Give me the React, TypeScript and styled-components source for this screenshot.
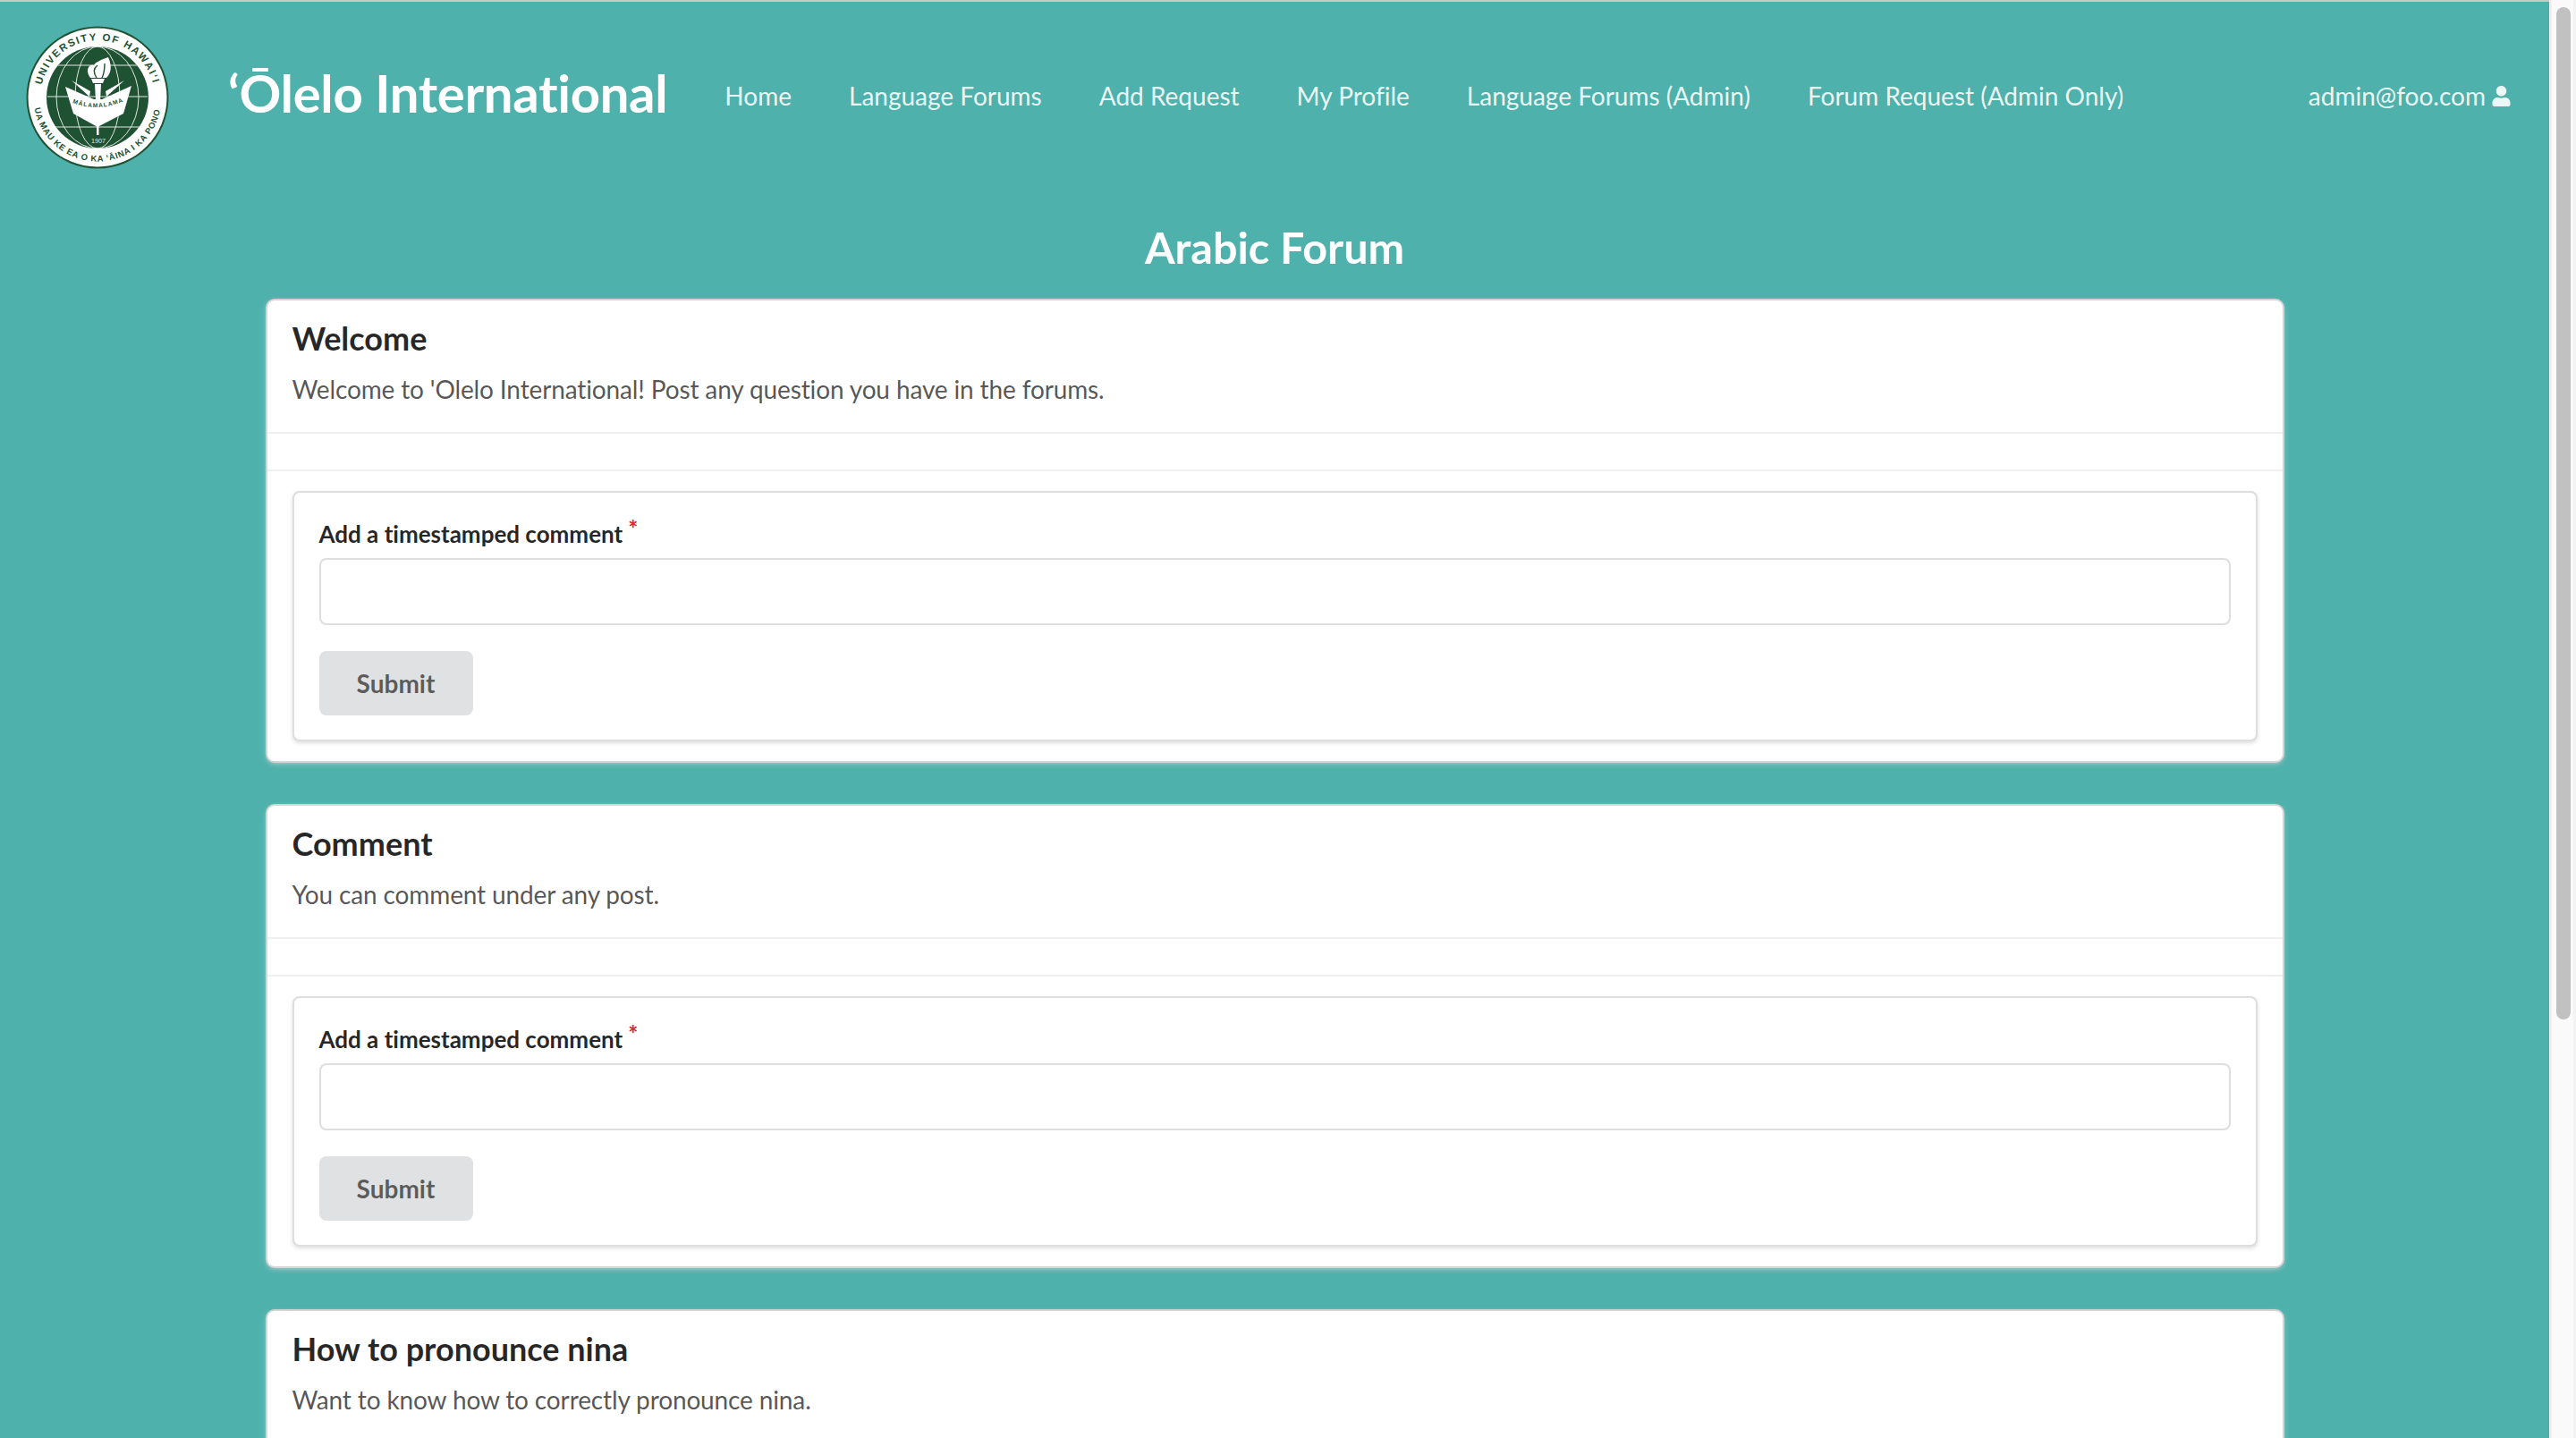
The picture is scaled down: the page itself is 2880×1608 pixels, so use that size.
import React from 'react';
import styled, { createGlobalStyle } from 'styled-components';
import { FaUser } from 'react-icons/fa';

const GlobalStyle = createGlobalStyle`
	html,
	body {
		margin: 0;
		padding: 0;
		height: 100%;
		overflow: hidden;
		background: #4fb1ac;
		font-family: 'Lato', 'Helvetica Neue', Arial, sans-serif;
		font-variant-ligatures: none;
	}

	* {
		box-sizing: border-box;
	}
`;

const Shell = styled.div`
	height: 100vh;
	display: flex;
`;

const Page = styled.div`
	flex: 1;
	min-width: 0;
	overflow: hidden;
	background: #4fb1ac;
	border-top: 2px solid #c9c9c9;
`;

const ScrollRail = styled.div`
	width: 30px;
	flex: none;
	padding: 8px 3px 0 5px;
	background: #fafafa;
	border-left: 3px solid #efefef;
	border-right: 3px solid #f3f3f3;
`;

const ScrollThumb = styled.div`
	height: 1132px;
	background: #c1c1c1;
	border-radius: 8px;
`;

const Header = styled.header`
	height: 214px;
	padding: 0 42px 0 29px;
	display: flex;
	align-items: center;
`;

const Logo = styled.svg`
	width: 160px;
	height: 160px;
	flex: none;
	margin-right: 66px;
`;

const Brand = styled.a`
	padding-bottom: 12px;
	font-size: 58px;
	font-weight: 700;
	letter-spacing: -0.3px;
	color: #fff;
	white-space: nowrap;
	margin-right: 32px;
`;

const NavLink = styled.a<{ $right?: boolean }>`
	display: flex;
	align-items: center;
	gap: 6px;
	padding: 0 32px 4px;
	font-size: 28px;
	color: rgba(255, 255, 255, 0.9);
	white-space: nowrap;
	${(p) => p.$right && 'margin-left: auto; padding-right: 0;'}
`;

const PageTitle = styled.h1`
	margin: 0;
	height: 120px;
	display: flex;
	align-items: center;
	justify-content: center;
	font-size: 48.5px;
	font-weight: 700;
	color: #fff;
`;

const CardList = styled.main`
	width: 2253px;
	margin: 0 auto;
	display: flex;
	flex-direction: column;
	gap: 50px;
`;

const Card = styled.section`
	flex: none;
	background: #fff;
	border-radius: 8px;
	box-shadow: 0 2px 6px 0 #d4d4d5, 0 0 0 2px #d4d4d5;
`;

const CardContent = styled.div`
	height: 147px;
	padding: 20px 28px 0;
`;

const CardTitle = styled.h2`
	margin: 0;
	font-size: 36px;
	line-height: 44px;
	font-weight: 700;
	color: rgba(0, 0, 0, 0.85);
`;

const CardText = styled.p`
	margin: 15px 0 0;
	font-size: 28px;
	line-height: 40px;
	letter-spacing: -0.13px;
	color: rgba(0, 0, 0, 0.68);
`;

const CardExtra = styled.div`
	height: 44px;
	border-top: 2px solid rgba(34, 36, 38, 0.07);
	border-bottom: 2px solid rgba(34, 36, 38, 0.07);
`;

const CardForm = styled.div`
	padding: 22px 28px;
`;

const Segment = styled.form`
	padding: 28px 28px 0;
	height: 280px;
	border-radius: 8px;
	border: 2px solid rgba(34, 36, 38, 0.15);
	box-shadow: 0 2px 4px 0 rgba(34, 36, 38, 0.15);
`;

const Label = styled.label`
	display: block;
	font-size: 26px;
	line-height: 36px;
	font-weight: 700;
	color: rgba(0, 0, 0, 0.87);
	margin-bottom: 9px;
`;

const Required = styled.span`
	display: inline-block;
	vertical-align: top;
	margin: -6px 0 0 6px;
	color: #db2828;
`;

const TextInput = styled.input`
	display: block;
	width: 100%;
	height: 75px;
	border: 2px solid rgba(34, 36, 38, 0.15);
	border-radius: 8px;
	background: #fff;
	outline: none;
`;

const SubmitButton = styled.button`
	display: block;
	width: 172px;
	height: 72px;
	margin-top: 29px;
	border: 0;
	border-radius: 8px;
	background: #e0e1e2;
	font-family: inherit;
	font-size: 28px;
	font-weight: 700;
	color: rgba(0, 0, 0, 0.6);
`;

const SealLogo = () => (
	<Logo viewBox="0 0 160 160">
		<defs>
			<path id="seal-top" d="M 17.6 66 A 64 64 0 0 1 142.4 66" />
			<path id="seal-bottom" d="M 9.5 92 A 71.5 71.5 0 0 0 150.5 92" />
			<clipPath id="seal-globe">
				<circle cx="80" cy="80" r="57" />
			</clipPath>
		</defs>
		<circle cx="80" cy="80" r="79.5" fill="#1f5233" />
		<circle cx="80" cy="80" r="77.5" fill="#fff" />
		<circle cx="80" cy="80" r="57" fill="#1f5233" />
		<text fontFamily="Liberation Sans" fontWeight="700" fontSize="11.5" fill="#1f5233">
			<textPath href="#seal-top" textLength="170" lengthAdjust="spacing">
				UNIVERSITY OF HAWAI‘I
			</textPath>
		</text>
		<text fontFamily="Liberation Sans" fontWeight="700" fontSize="9.5" fill="#1f5233">
			<textPath href="#seal-bottom" textLength="198" lengthAdjust="spacing">
				UA MAU KE EA O KA ‘ĀINA I KA PONO
			</textPath>
		</text>
		<g clipPath="url(#seal-globe)" fill="none" stroke="#dfe8e2" strokeWidth="1">
			<ellipse cx="80" cy="80" rx="25" ry="57" />
			<ellipse cx="80" cy="80" rx="46" ry="57" />
			<path d="M 33 44 H 127 M 24 79 H 136 M 33 113 H 127" />
		</g>
		<path d="M72 58 C 66 50 70 42 76 44 C 78 40 84 38 92 35 C 96 44 96 52 90 58 Z" fill="#fff" />
		<path d="M79 58 C 75 52 76 47 80 44 M85 58 C 88 52 88 46 88 42" fill="none" stroke="#1f5233" strokeWidth="1.4" />
		<path d="M73 59 H 88 L 86 64 H 75 Z" fill="#fff" />
		<path d="M77 65 H 84 L 83 84 H 78 Z" fill="#fff" />
		<path d="M51 61 L 72 73 L 71 79 Z M 110 61 L 89 73 L 90 79 Z" fill="#fff" />
		<path d="M44 68 L 76 82 L 85 82 L 118 67 L 109 98 L 80 113 L 53 98 Z" fill="#fff" />
		<path d="M79 112 H 81.5 L 81.5 122 H 79 Z" fill="#fff" />
		<path id="seal-book" d="M 52 86 Q 80 97 110 84" fill="none" />
		<text fontFamily="Liberation Sans" fontWeight="700" fontSize="6.6" fill="#1f5233">
			<textPath href="#seal-book" textLength="58" lengthAdjust="spacing">MĀLAMALAMA</textPath>
		</text>
		<text x="81" y="131" textAnchor="middle" fontFamily="Liberation Sans" fontSize="7.2" fill="#dfe8e2">1907</text>
	</Logo>
);

type ForumCardProps = {
	title: string;
	text: string;
};

const ForumCard = ({ title, text }: ForumCardProps) => (
	<Card>
		<CardContent>
			<CardTitle>{title}</CardTitle>
			<CardText>{text}</CardText>
		</CardContent>
		<CardExtra />
		<CardForm>
			<Segment>
				<Label>
					Add a timestamped comment<Required>*</Required>
				</Label>
				<TextInput type="text" />
				<SubmitButton type="button">Submit</SubmitButton>
			</Segment>
		</CardForm>
	</Card>
);

const App = () => (
	<Shell>
		<GlobalStyle />
		<Page>
			<Header>
				<SealLogo />
				<Brand>‘Ōlelo International</Brand>
				<NavLink>Home</NavLink>
				<NavLink>Language Forums</NavLink>
				<NavLink>Add Request</NavLink>
				<NavLink>My Profile</NavLink>
				<NavLink>Language Forums (Admin)</NavLink>
				<NavLink>Forum Request (Admin Only)</NavLink>
				<NavLink $right>
					admin@foo.com
					<FaUser fontSize={23} />
				</NavLink>
			</Header>
			<PageTitle>Arabic Forum</PageTitle>
			<CardList>
				<ForumCard
					title="Welcome"
					text="Welcome to 'Olelo International! Post any question you have in the forums."
				/>
				<ForumCard title="Comment" text="You can comment under any post." />
				<ForumCard
					title="How to pronounce nina"
					text="Want to know how to correctly pronounce nina."
				/>
			</CardList>
		</Page>
		<ScrollRail>
			<ScrollThumb />
		</ScrollRail>
	</Shell>
);

export default App;
